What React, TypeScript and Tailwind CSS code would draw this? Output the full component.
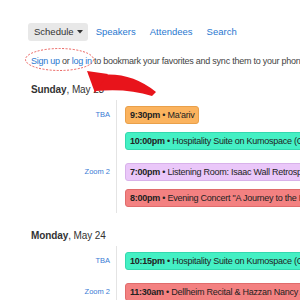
import React from "react";

type Ev = { time: string; title: string; color: string };
type Group = { label: string; events: Ev[] };
type Day = { bold: string; rest: string; groups: Group[] };

const ORANGE = "bg-[#fbb35e] border-[#e9a04a]";
const TEAL = "bg-[#44f0c4] border-[#34d8ae]";
const PURPLE = "bg-[#eac7f9] border-[#d8b2ea]";
const RED = "bg-[#f38181] border-[#e06c6c]";

const days: Day[] = [
  {
    bold: "Sunday",
    rest: ", May 23",
    groups: [
      {
        label: "TBA",
        events: [
          { time: "9:30pm", title: "Ma'ariv", color: ORANGE },
          { time: "10:00pm", title: "Hospitality Suite on Kumospace (Open all night)", color: TEAL },
        ],
      },
      {
        label: "Zoom 2",
        events: [
          { time: "7:00pm", title: "Listening Room: Isaac Wall Retrospective", color: PURPLE },
          { time: "8:00pm", title: "Evening Concert \"A Journey to the Holy Land\"", color: RED },
        ],
      },
    ],
  },
  {
    bold: "Monday",
    rest: ", May 24",
    groups: [
      {
        label: "TBA",
        events: [{ time: "10:15pm", title: "Hospitality Suite on Kumospace (Open all night)", color: TEAL }],
      },
      {
        label: "Zoom 2",
        events: [{ time: "11:30am", title: "Dellheim Recital & Hazzan Nancy Abramson", color: RED }],
      },
    ],
  },
];

function DaySection({ day, first }: { day: Day; first: boolean }) {
  return (
    <div className={first ? "mt-[15px]" : "mt-[16px]"}>
      <h2 className="pl-[31px] text-[10px] leading-[14px] tracking-[-0.1px] text-[#333]">
        <span className="font-bold">{day.bold}</span>
        {day.rest}
      </h2>
      <div className="mt-[3px]">
        {day.groups.map((g, gi) => (
          <div key={gi} className="flex">
            <div
              className={`w-[116px] shrink-0 pr-[6px] text-right text-[7.5px] leading-[18px] text-[#3a7bd5] ${
                gi === 0 ? "pt-[6px]" : "pt-[7px]"
              }`}
            >
              {g.label}
            </div>
            <div
              className={`flex flex-col gap-[8px] border-l border-[#e4e4e4] pl-[8px] ${
                gi === 0 ? "pt-[6px] pb-[6px]" : "pt-[7px] pb-[6px]"
              }`}
            >
              {g.events.map((e, ei) => (
                <div
                  key={ei}
                  className={`w-max h-[18px] rounded-[3px] border px-[4px] text-[9px] leading-[16px] tracking-[-0.25px] text-[#222] whitespace-nowrap ${e.color}`}
                >
                  <span className="font-bold">{e.time}</span> • {e.title}
                </div>
              ))}
            </div>
          </div>
        ))}
      </div>
    </div>
  );
}

export default function App() {
  return (
    <div className="relative w-[300px] h-[300px] overflow-hidden bg-white font-['Liberation_Sans',Arial,sans-serif]">
      <div className="pl-[28px] pt-[23px] flex items-center text-[9.5px] whitespace-nowrap">
        <div className="h-[18px] pl-[6px] pr-[5px] flex items-center rounded-[3px] bg-[#e8e8e8] text-[#333]">
          Schedule
          <svg className="ml-[3px]" width="6" height="4" viewBox="0 0 6 4">
            <polygon points="0,0 6,0 3,3.5" fill="#333" />
          </svg>
        </div>
        <span className="ml-[8px] text-[#2a78d0]">Speakers</span>
        <span className="ml-[14px] text-[#2a78d0]">Attendees</span>
        <span className="ml-[14px] text-[#2a78d0]">Search</span>
      </div>

      <p className="mt-[13px] pl-[31px] text-[9px] leading-[14px] tracking-[-0.25px] text-[#444] whitespace-nowrap">
        <span className="text-[#2a78d0]">Sign up</span> or <span className="text-[#2a78d0]">log in</span> to
        bookmark your favorites and sync them to your phone
      </p>

      {days.map((d, i) => (
        <DaySection key={i} day={d} first={i === 0} />
      ))}

      <svg className="absolute left-0 top-0 pointer-events-none" width="300" height="300" viewBox="0 0 300 300">
        <ellipse cx="59.5" cy="59.5" rx="34" ry="11" fill="none" stroke="#e53935" strokeWidth="0.8" strokeDasharray="2 1.5" />
        <path d="M101 75 Q131 72 156 92 L152 96 Q127 88 96 91 Z" fill="#e8141b" />
        <polygon points="87,71 108,74 95,93" fill="#e8141b" />
      </svg>
    </div>
  );
}
